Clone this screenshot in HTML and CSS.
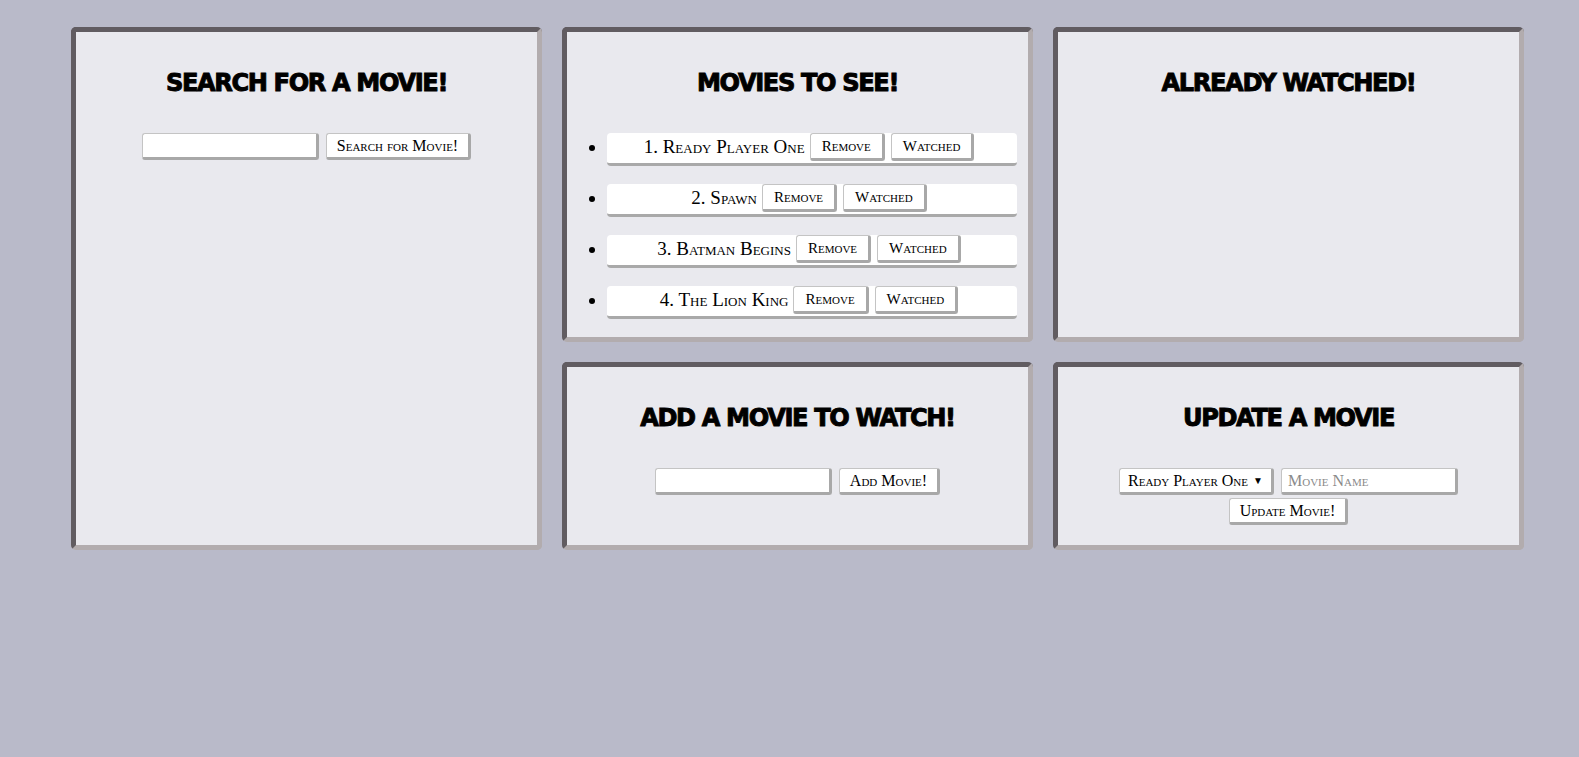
FILE: index.html
```html
<!DOCTYPE html>
<html lang="en">
<head>
<meta charset="utf-8">
<title>Movie List</title>
<link rel="stylesheet" href="styles.css">
</head>
<body>
<main class="board">
  <section class="card card-search">
    <h2 class="card-title">Search for a movie!</h2>
    <form class="form-row">
      <input class="field" type="text">
      <button class="btn" type="button">Search for Movie!</button>
    </form>
  </section>

  <section class="card card-tosee">
    <h2 class="card-title">Movies to see!</h2>
    <ul class="movie-list">
      <li class="movie"><span class="movie-name">1. Ready Player One</span><button class="btn btn-sm" type="button">Remove</button><button class="btn btn-sm" type="button">Watched</button></li>
      <li class="movie"><span class="movie-name">2. Spawn</span><button class="btn btn-sm" type="button">Remove</button><button class="btn btn-sm" type="button">Watched</button></li>
      <li class="movie"><span class="movie-name">3. Batman Begins</span><button class="btn btn-sm" type="button">Remove</button><button class="btn btn-sm" type="button">Watched</button></li>
      <li class="movie"><span class="movie-name">4. The Lion King</span><button class="btn btn-sm" type="button">Remove</button><button class="btn btn-sm" type="button">Watched</button></li>
    </ul>
  </section>

  <section class="card card-watched">
    <h2 class="card-title">Already watched!</h2>
  </section>

  <section class="card card-add">
    <h2 class="card-title">Add a movie to watch!</h2>
    <form class="form-row">
      <input class="field" type="text">
      <button class="btn" type="button">Add Movie!</button>
    </form>
  </section>

  <section class="card card-update">
    <h2 class="card-title">Update a movie</h2>
    <form class="form-stack">
      <div class="form-row">
        <label class="select-wrap">
          <select class="select">
            <option>Ready Player One</option>
            <option>Spawn</option>
            <option>Batman Begins</option>
            <option>The Lion King</option>
          </select>
        </label>
        <input class="field" type="text" placeholder="Movie Name">
      </div>
      <button class="btn" type="button">Update Movie!</button>
    </form>
  </section>
</main>
</body>
</html>
```

FILE: styles.css
```css
* { box-sizing: border-box; }

html, body {
  margin: 0;
  padding: 0;
  background: #b9bac9;
}

body {
  font-family: "Liberation Serif", "DejaVu Serif", serif;
  font-variant: small-caps;
  color: #000;
  min-height: 757px;
}

.board {
  display: grid;
  grid-template-columns: repeat(3, 1fr);
  grid-template-rows: 315px 188px;
  gap: 20px;
  padding: 27px 55px 0 71px;
}

.card {
  background: #e9e9ee;
  border-style: solid;
  border-width: 5px;
  border-color: #615c61 #b2acae #b2acae #615c61;
  border-radius: 5px;
  padding: 36px 0 0;
  display: flex;
  flex-direction: column;
  align-items: center;
}

.card-search { grid-column: 1; grid-row: 1 / span 2; }
.card-tosee { grid-column: 2; grid-row: 1; }
.card-watched { grid-column: 3; grid-row: 1; }
.card-add { grid-column: 2; grid-row: 2; }
.card-update { grid-column: 3; grid-row: 2; }

.card-title {
  margin: 0 0 35px;
  height: 30px;
  line-height: 30px;
  font-family: "DejaVu Sans", sans-serif;
  font-variant: normal;
  font-weight: bold;
  font-size: 24px;
  text-transform: uppercase;
  letter-spacing: -1.3px;
  -webkit-text-stroke: 0.9px #000;
  text-shadow: 1px 0 0 rgba(170, 120, 60, 0.35);
}

.form-row {
  display: flex;
  align-items: center;
  justify-content: center;
  gap: 7px;
  margin: 0;
}

.form-stack {
  display: flex;
  flex-direction: column;
  align-items: center;
  gap: 3px;
  margin: 0;
}

.field {
  width: 177px;
  height: 27px;
  background: #fff;
  border-style: solid;
  border-width: 1px 3px 3px 1px;
  border-color: #c4c4c4 #a8a8a8 #a8a8a8 #c4c4c4;
  border-radius: 3px;
  padding: 0 6px;
  font-family: inherit;
  font-variant: small-caps;
  font-size: 16px;
  outline: none;
}

.field::placeholder { color: #8a8a8a; }

.btn {
  height: 27px;
  background: #fff;
  border-style: solid;
  border-width: 1px 3px 3px 1px;
  border-color: #c4c4c4 #a8a8a8 #a8a8a8 #c4c4c4;
  border-radius: 3px;
  padding: 0 10px;
  font-family: inherit;
  font-variant: small-caps;
  font-size: 16px;
  color: #000;
  cursor: pointer;
}

.select-wrap {
  position: relative;
  display: block;
}

.select-wrap::after {
  content: "\25BC";
  position: absolute;
  right: 11px;
  top: 7px;
  font-size: 10px;
  pointer-events: none;
}

.select {
  appearance: none;
  -webkit-appearance: none;
  width: 155px;
  height: 27px;
  background: #fff;
  border-style: solid;
  border-width: 1px 3px 3px 1px;
  border-color: #c4c4c4 #a8a8a8 #a8a8a8 #c4c4c4;
  border-radius: 3px;
  padding: 0 22px 0 8px;
  font-family: inherit;
  font-variant: small-caps;
  font-size: 16px;
  color: #000;
}

.movie-list {
  align-self: stretch;
  list-style: disc;
  margin: 0;
  padding: 0 11px 0 40px;
}

.movie {
  display: list-item;
  height: 33px;
  margin: 0 0 18px;
  background: #fff;
  border-bottom: 3px solid #a9a9a9;
  border-radius: 4px;
  text-align: center;
  line-height: 28px;
  font-size: 19px;
}

.movie-name {
  display: inline-block;
  vertical-align: top;
  height: 28px;
  line-height: 28px;
  margin-right: 5px;
}

.btn-sm {
  height: 28px;
  vertical-align: top;
  margin-right: 6px;
  font-size: 15px;
  padding: 0 11px;
}
```
